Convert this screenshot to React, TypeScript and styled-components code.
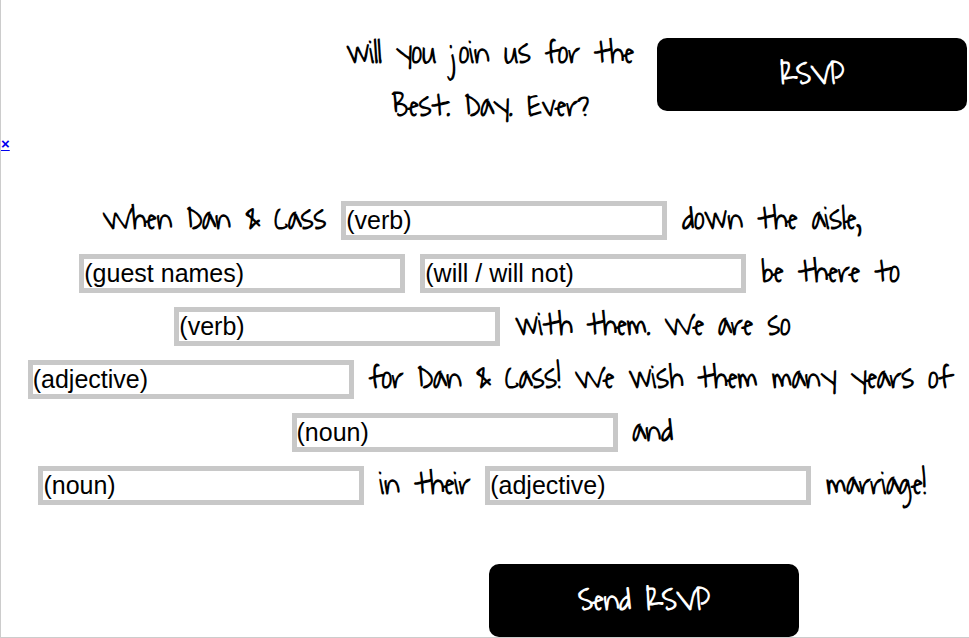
import React from 'react';
import styled, { createGlobalStyle } from 'styled-components';

const script = 'bold 32px/53px "Waiting for the Sunrise", Lato, sans-serif';

const GlobalStyle = createGlobalStyle`
  *, *::before, *::after { box-sizing: border-box; }
  body { margin: 0; background: #fff; color: #000; }
`;

const Page = styled.main`
  display: flex;
  flex-direction: column;
  border-left: 1px solid #ccc;
  border-bottom: 1px solid #ccc;
`;

const Header = styled.header`
  display: flex;
  justify-content: flex-end;
  align-items: flex-start;
  gap: 23px;
  padding: 27px 2px 0 0;
`;

const Question = styled.h1`
  margin: 0;
  font: ${script};
  text-align: center;
`;

const Button = styled.button`
  width: 310px;
  height: 73px;
  padding: 0;
  border: 0;
  border-radius: 10px;
  background: #000;
  color: #fff;
  font: ${script};
  cursor: pointer;
`;

const HeaderAction = styled.div`
  display: flex;
  padding-top: 11px;
`;

const CloseLink = styled.a`
  align-self: flex-start;
  margin-top: 2px;
  color: #00e;
  font: bold 15px/18px "Liberation Sans", Arial, sans-serif;
  text-decoration-thickness: 1px;
`;

const Form = styled.form`
  display: flex;
  flex-direction: column;
  padding-top: 41px;
`;

const Line = styled.div`
  display: flex;
  justify-content: center;
  align-items: center;
  gap: 15px;
  height: 53px;
  padding-left: 9px;
`;

const Words = styled.span`
  padding-bottom: 2px;
  font: ${script};
  white-space: nowrap;
`;

const Blank = styled.input`
  width: 326px;
  height: 39px;
  padding: 0;
  border: 5px solid #c8c8c8;
  border-radius: 0;
  background: #fff;
  color: #000;
  font: 25px "Liberation Sans", Arial, sans-serif;
`;

const Submit = styled.div`
  display: flex;
  padding: 52px 0 0 calc(50% + 4px);
`;

type Part = string | { blank: string; label: string };

const lines: Part[][] = [
  ['When Dan & Cass', { blank: '(verb)', label: 'First verb' }, 'down the aisle,\u00a0'],
  [
    { blank: '(guest names)', label: 'Guest names' },
    { blank: '(will / will not)', label: 'Will or will not' },
    'be there to',
  ],
  [{ blank: '(verb)', label: 'Second verb' }, 'with them. We are so\u00a0'],
  [
    { blank: '(adjective)', label: 'First adjective' },
    'for Dan & Cass! We wish them many years of',
  ],
  [{ blank: '(noun)', label: 'First noun' }, 'and\u00a0'],
  [
    { blank: '(noun)', label: 'Second noun' },
    'in their',
    { blank: '(adjective)', label: 'Second adjective' },
    'marriage!\u00a0',
  ],
];

export default function App() {
  return (
    <>
      <GlobalStyle />
      <Page>
        <Header>
          <Question>
            will you join us for the
            <br />
            Best. Day. Ever?
          </Question>
          <HeaderAction>
            <Button type="button">RSVP</Button>
          </HeaderAction>
        </Header>
        <CloseLink href="#">×</CloseLink>
        <Form onSubmit={(event) => event.preventDefault()}>
          {lines.map((line, row) => (
            <Line key={row}>
              {line.map((part) =>
                typeof part === 'string' ? (
                  <Words key={part}>{part}</Words>
                ) : (
                  <Blank
                    key={part.label}
                    type="text"
                    aria-label={part.label}
                    defaultValue={part.blank}
                  />
                ),
              )}
            </Line>
          ))}
          <Submit>
            <Button type="submit">Send RSVP</Button>
          </Submit>
        </Form>
      </Page>
    </>
  );
}
